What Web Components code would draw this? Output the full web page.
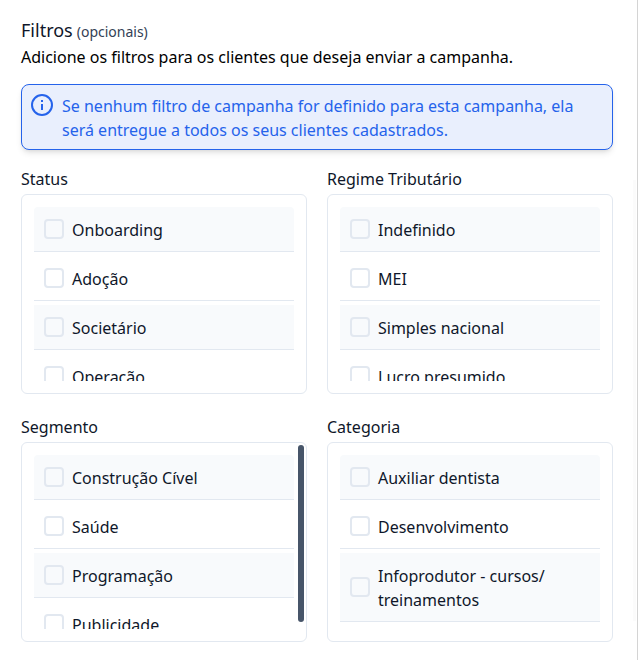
<!DOCTYPE html>
<html lang="pt-BR">
<head>
<meta charset="utf-8">
<title>Filtros</title>
<style>
html,body{margin:0;height:100%}
body{background:#fff;font:16px/24px "Noto Sans",sans-serif;color:#0f172a;overflow:hidden}
</style>
</head>
<body>
<campaign-filters>
  <info-alert slot="alert">Se nenhum filtro de campanha for definido para esta campanha, ela será entregue a todos os seus clientes cadastrados.</info-alert>
  <filter-group label="Status">
    <check-row>Onboarding</check-row><check-row>Adoção</check-row><check-row>Societário</check-row><check-row>Operação</check-row>
  </filter-group>
  <filter-group label="Regime Tributário">
    <check-row>Indefinido</check-row><check-row>MEI</check-row><check-row>Simples nacional</check-row><check-row>Lucro presumido</check-row>
  </filter-group>
  <filter-group label="Segmento" scrollbar>
    <check-row>Construção Cível</check-row><check-row>Saúde</check-row><check-row>Programação</check-row><check-row>Publicidade</check-row>
  </filter-group>
  <filter-group label="Categoria">
    <check-row>Auxiliar dentista</check-row><check-row>Desenvolvimento</check-row><check-row>Infoprodutor - cursos/<br>treinamentos</check-row>
  </filter-group>
</campaign-filters>
<script>
const define = (name, html) => customElements.define(name, class extends HTMLElement {
  constructor() {
    super();
    this.attachShadow({mode: 'open'}).innerHTML = html;
  }
  connectedCallback() {
    const label = this.shadowRoot.querySelector('.label');
    if (label) label.textContent = this.getAttribute('label');
  }
});

define('campaign-filters', `<style>
:host{display:block;position:relative;box-sizing:border-box;height:660px;padding:16px 24px 0 21px;border-right:1px solid #d4d4d4}
h2{display:flex;align-items:baseline;gap:4px;margin:0;height:29px;font-size:18px;line-height:28px;font-weight:400}
small{font-size:14px;color:#334155}
p{margin:0;color:#000}
.alert{margin-top:15px}
.grid{display:grid;grid-template-columns:286px 286px;column-gap:20px;row-gap:20px;margin-top:17px}
.track{position:absolute;right:1px;top:180px;width:3px;height:441px;background:#fbfbfb}
</style>
<h2>Filtros <small>(opcionais)</small></h2>
<p>Adicione os filtros para os clientes que deseja enviar a campanha.</p>
<div class="alert"><slot name="alert"></slot></div>
<div class="grid"><slot></slot></div>
<div class="track"></div>`);

define('info-alert', `<style>
:host{display:flex;box-sizing:border-box;width:592px;height:66px;padding:9px 8px 7px;gap:8px;border:1px solid #2563eb;border-radius:8px;background:#e9effd;color:#2563eb;box-shadow:0 4px 6px -1px #0000001a,0 2px 4px -2px #0000001a}
svg{flex:none;width:24px;height:24px;margin-top:-1px}
</style>
<svg viewBox="0 0 24 24" fill="none" stroke="currentColor" stroke-width="2"><circle cx="12" cy="12" r="10"/><path d="M12 11v6M12 7v2"/></svg>
<div><slot></slot></div>`);

define('filter-group', `<style>
:host{display:block}
.label{height:27px}
.box{position:relative;box-sizing:border-box;height:200px;padding:12px;border:1px solid #e2e8f0;border-radius:6px;margin-bottom:1px}
.list{display:flex;flex-direction:column;gap:4px;height:174px;overflow:hidden}
.thumb{display:none;position:absolute;right:2px;top:2px;width:6px;height:177px;border-radius:3px;background:#475569}
:host([scrollbar]) .thumb{display:block}
</style>
<div class="label"></div>
<div class="box"><div class="list"><slot></slot></div><div class="thumb"></div></div>`);

define('check-row', `<style>
:host{display:flex;flex:none;align-items:center;gap:8px;padding:10px;border-bottom:1px solid #e2e8f0}
:host(:nth-child(odd)){background:#f8fafc}
:host(:first-child){border-radius:4px 4px 0 0}
i{flex:none;box-sizing:border-box;width:20px;height:20px;border:2px solid #e2e8f0;border-radius:4px}
span{margin:1px 0 -1px}
</style>
<i></i><span><slot></slot></span>`);
</script>
</body>
</html>
